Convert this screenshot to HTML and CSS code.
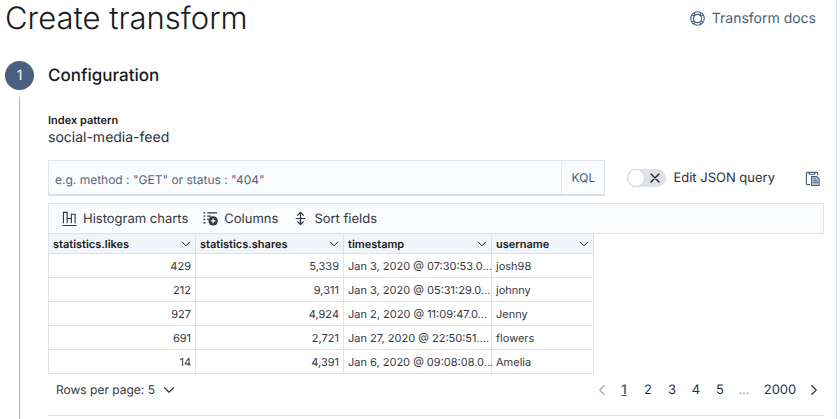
FILE: index.html
```html
<!DOCTYPE html>
<html lang="en">
<head>
<meta charset="utf-8">
<title>Create transform</title>
<link rel="stylesheet" href="styles.css">
</head>
<body>
<svg class="defs" aria-hidden="true">
  <symbol id="chevron" viewBox="0 0 16 16"><path d="M2 5l6 6 6-6" fill="none" stroke="currentColor" stroke-width="1.500" stroke-linecap="round" stroke-linejoin="round"/></symbol>
</svg>
<main class="page">
  <header class="header">
    <h1 class="title">Create transform</h1>
    <a class="docs" href="#docs">
      <svg class="icon" viewBox="0 0 16 16" fill="none" stroke="currentColor" stroke-width="1.200"><circle cx="8" cy="8" r="7.200"/><circle cx="8" cy="8" r="4.400"/><path d="M4.200 2l1.200 2.800M2 4.200l2.800 1.200M11.800 2l-1.200 2.800M14 4.200l-2.800 1.200M4.200 14l1.200-2.800M2 11.800l2.800-1.200M11.800 14l-1.200-2.800M14 11.800l-2.800-1.200"/></svg>
      Transform docs
    </a>
  </header>
  <section class="step">
    <div class="rail"><span class="number">1</span><span class="line"></span></div>
    <div class="content">
      <h2 class="step-title">Configuration</h2>
      <dl class="field">
        <dt>Index pattern</dt>
        <dd>social-media-feed</dd>
      </dl>
      <div class="query-row">
        <form class="search">
          <input class="search-input" type="text" aria-label="Query" placeholder='e.g. method : "GET" or status : "404"'>
          <button class="kql" type="button">KQL</button>
        </form>
        <label class="switch">
          <input class="switch-input" type="checkbox">
          <span class="track"><span class="thumb"></span><svg class="cross" viewBox="0 0 10 10"><path d="M1 1l8 8M9 1L1 9" fill="none" stroke="currentColor" stroke-width="1.300" stroke-linecap="round"/></svg></span>
          Edit JSON query
        </label>
        <button class="copy" type="button" aria-label="Copy to clipboard">
          <svg class="icon" viewBox="0 0 16 16" fill="none" stroke="currentColor"><path d="M5.500 14.500h-3a1 1 0 0 1-1-1v-11a1 1 0 0 1 1-1h10a1 1 0 0 1 1 1v2M4.500 1v2.500h6V1" stroke-width="1.200"/><path d="M7 6h5.500L15 8.500V15.500H7z" fill="#b9c6da" stroke-width="1.200"/><path d="M9 8.500h2.500M9 10.500h4.500M9 12.500h4.500"/></svg>
        </button>
      </div>
      <div class="toolbar">
        <button class="tool" type="button">
          <svg class="icon" viewBox="0 0 16 16" fill="none" stroke="currentColor" stroke-width="1.200"><path d="M1.500 13v-11.500h4v11.500M5.500 8h4.500v5M10 13v-9.500h4v9.500M0.500 15.400h15"/></svg>
          Histogram charts
        </button>
        <button class="tool" type="button">
          <svg class="icon" viewBox="0 0 16 16" fill="none" stroke="currentColor"><path d="M0.500 2h2M0.500 5.500h2M0.500 9h2M0.500 12.500h2M4.500 2H15M4.500 5.500h4M4.500 9h1.500" stroke-width="1.400"/><circle cx="10.800" cy="10.500" r="5" fill="currentColor" stroke="none"/><path d="M10.800 8v5M8.300 10.500h5" stroke="#fff" stroke-width="1.300"/></svg>
          Columns
        </button>
        <button class="tool" type="button">
          <svg class="icon" viewBox="0 0 16 16" fill="none" stroke="currentColor" stroke-width="1.300" stroke-linejoin="round" stroke-linecap="round"><path d="M8 2v12M5 4.500L8 1.500l3 3M5 11.500l3 3 3-3M3.500 8h9"/></svg>
          Sort fields
        </button>
      </div>
      <table class="grid">
        <colgroup><col class="c-num"><col class="c-wide"><col class="c-wide"><col class="c-name"></colgroup>
        <thead>
          <tr>
            <th><button type="button" class="head">statistics.likes<svg class="caret"><use href="#chevron"/></svg></button></th>
            <th><button type="button" class="head">statistics.shares<svg class="caret"><use href="#chevron"/></svg></button></th>
            <th><button type="button" class="head">timestamp<svg class="caret"><use href="#chevron"/></svg></button></th>
            <th><button type="button" class="head">username<svg class="caret"><use href="#chevron"/></svg></button></th>
          </tr>
        </thead>
        <tbody>
          <tr><td class="num">429</td><td class="num">5,339</td><td>Jan 3, 2020 @ 07:30:53.0...</td><td>josh98</td></tr>
          <tr><td class="num">212</td><td class="num">9,311</td><td>Jan 3, 2020 @ 05:31:29.0...</td><td>johnny</td></tr>
          <tr><td class="num">927</td><td class="num">4,924</td><td>Jan 2, 2020 @ 11:09:47.0...</td><td>Jenny</td></tr>
          <tr><td class="num">691</td><td class="num">2,721</td><td>Jan 27, 2020 @ 22:50:51....</td><td>flowers</td></tr>
          <tr><td class="num">14</td><td class="num">4,391</td><td>Jan 6, 2020 @ 09:08:08.0...</td><td>Amelia</td></tr>
        </tbody>
      </table>
      <div class="footer">
        <button class="rows" type="button">Rows per page: 5 <svg class="caret"><use href="#chevron"/></svg></button>
        <nav class="pages" aria-label="Pages">
          <button class="arrow" type="button" aria-label="Previous page" disabled><svg class="caret prev"><use href="#chevron"/></svg></button>
          <a class="page-link current" href="#1" aria-current="page">1</a>
          <a class="page-link" href="#2">2</a>
          <a class="page-link" href="#3">3</a>
          <a class="page-link" href="#4">4</a>
          <a class="page-link" href="#5">5</a>
          <span class="page-link dots">...</span>
          <a class="page-link last" href="#2000">2000</a>
          <button class="arrow" type="button" aria-label="Next page"><svg class="caret next"><use href="#chevron"/></svg></button>
        </nav>
      </div>
    </div>
  </section>
</main>
</body>
</html>
```
FILE: styles.css
```css
* { box-sizing: border-box; }
body {
  margin: 0;
  background: #fafbfd;
  color: #343741;
  font: 13px/18px Inter, "Liberation Sans", sans-serif;
  text-rendering: geometricPrecision;
}
button {
  margin: 0;
  padding: 0;
  border: 0;
  background: none;
  color: inherit;
  font: inherit;
  text-rendering: inherit;
}
a { color: inherit; text-decoration: none; }
.defs { display: none; }
.icon { width: 15px; height: 15px; flex: none; }
.caret { width: 12px; height: 12px; flex: none; }

.page {
  display: flex;
  flex-direction: column;
  min-height: 100vh;
  margin-right: 3px;
  padding: 0 12px 0 5px;
  border-right: 1px solid #d3dae6;
  background: #fff;
}
.header {
  display: flex;
  justify-content: space-between;
  align-items: center;
  padding-right: 8px;
  margin-bottom: 24px;
}
.title {
  margin: 0;
  color: #1a1c21;
  font-size: 31px;
  line-height: 37px;
  font-weight: 300;
}
.docs {
  display: flex;
  align-items: center;
  gap: 7px;
  color: #4a5f80;
  font-size: 14px;
}

.step {
  display: grid;
  grid-template-columns: 29px minmax(0, 1fr);
  column-gap: 14px;
  flex: 1;
}
.rail {
  display: flex;
  flex-direction: column;
  align-items: center;
  gap: 7px;
}
.number {
  width: 29px;
  height: 29px;
  border-radius: 50%;
  background: #4a5f80;
  color: #fff;
  font-size: 14px;
  line-height: 29px;
  text-align: center;
}
.line { flex: 1; width: 1px; background: #a3b1c8; }
.step-title {
  margin: 0 0 20px;
  color: #1a1c21;
  font-size: 17px;
  line-height: 31px;
  font-weight: 500;
}
.field { margin: 0 0 12px; }
.field dt { color: #1a1c21; font-size: 11px; line-height: 16px; font-weight: 600; }
.field dd { margin: 0; font-size: 14px; line-height: 20px; color: #2b3040; }

.query-row { display: flex; align-items: center; margin-bottom: 7px; }
.search {
  display: flex;
  flex: 1;
  height: 36px;
  border: 1px solid #dfe4ed;
  border-bottom: 2px solid #d9dfe9;
  background: #fafbfd;
}
.search-input {
  flex: 1;
  min-width: 0;
  padding: 4px 6px 0;
  border: 0;
  background: none;
  color: #343741;
  font: inherit;
  font-size: 12px;
  text-rendering: inherit;
}
.search-input::placeholder { color: #59647a; opacity: 1; }
.kql { width: 43px; border-left: 1px solid #e6eaf2; color: #4a5f80; font-size: 12px; }
.switch {
  position: relative;
  display: flex;
  align-items: center;
  gap: 7px;
  margin: 0 30px 0 22px;
  color: #2b3040;
}
.switch-input { position: absolute; opacity: 0; }
.track {
  display: flex;
  align-items: center;
  justify-content: space-between;
  width: 39px;
  height: 18px;
  padding-right: 6px;
  border-radius: 9px;
  background: #dfe2e8;
}
.thumb {
  width: 18px;
  height: 18px;
  border: 1px solid #d0d6e0;
  border-radius: 50%;
  background: #fff;
}
.cross { width: 10px; height: 10px; color: #1a1c21; }
.copy { display: flex; margin-right: 4px; color: #4a5f80; }

.toolbar {
  display: flex;
  align-items: center;
  gap: 15px;
  height: 31px;
  padding: 0 13px;
  border: 1px solid #dfe3eb;
  background: #fafbfd;
}
.tool { display: flex; align-items: center; gap: 6px; color: #343741; }

.grid {
  width: 546px;
  margin-top: -1px;
  border-collapse: collapse;
  table-layout: fixed;
  color: #343741;
  font-size: 11px;
}
.c-num { width: 147px; }
.c-wide { width: 148px; }
.c-name { width: 102px; }
.grid th, .grid td {
  padding: 0 4px;
  border: 1px solid #dde2ec;
  white-space: nowrap;
  text-align: left;
}
.grid th { height: 20px; background: #f1f4f9; }
.grid td { height: 24px; border-left-color: #edf0f6; }
.grid .num { text-align: right; }
.grid td:first-child { border-left-color: #dde2ec; }
.head {
  display: flex;
  align-items: center;
  justify-content: space-between;
  width: 100%;
  color: #1a1c21;
  font-weight: 600;
  text-align: left;
}
.head .caret { width: 10px; height: 10px; }

.footer {
  display: flex;
  align-items: center;
  justify-content: space-between;
  height: 42px;
  padding: 0 0 10px 8px;
  border-bottom: 1px solid #dde2ec;
}
.rows { display: flex; align-items: center; gap: 8px; font-size: 12px; }
.pages { display: flex; align-items: center; color: #2b3040; }
.page-link { width: 24px; text-align: center; }
.current { color: #4a5f80; font-weight: 600; text-decoration: underline; }
.dots { color: #8a94a8; }
.last { width: 48px; }
.arrow { display: flex; align-items: center; justify-content: center; width: 20px; }
.arrow:disabled { color: #98a8c2; }
.prev { transform: rotate(90deg); }
.next { transform: rotate(-90deg); }
```
